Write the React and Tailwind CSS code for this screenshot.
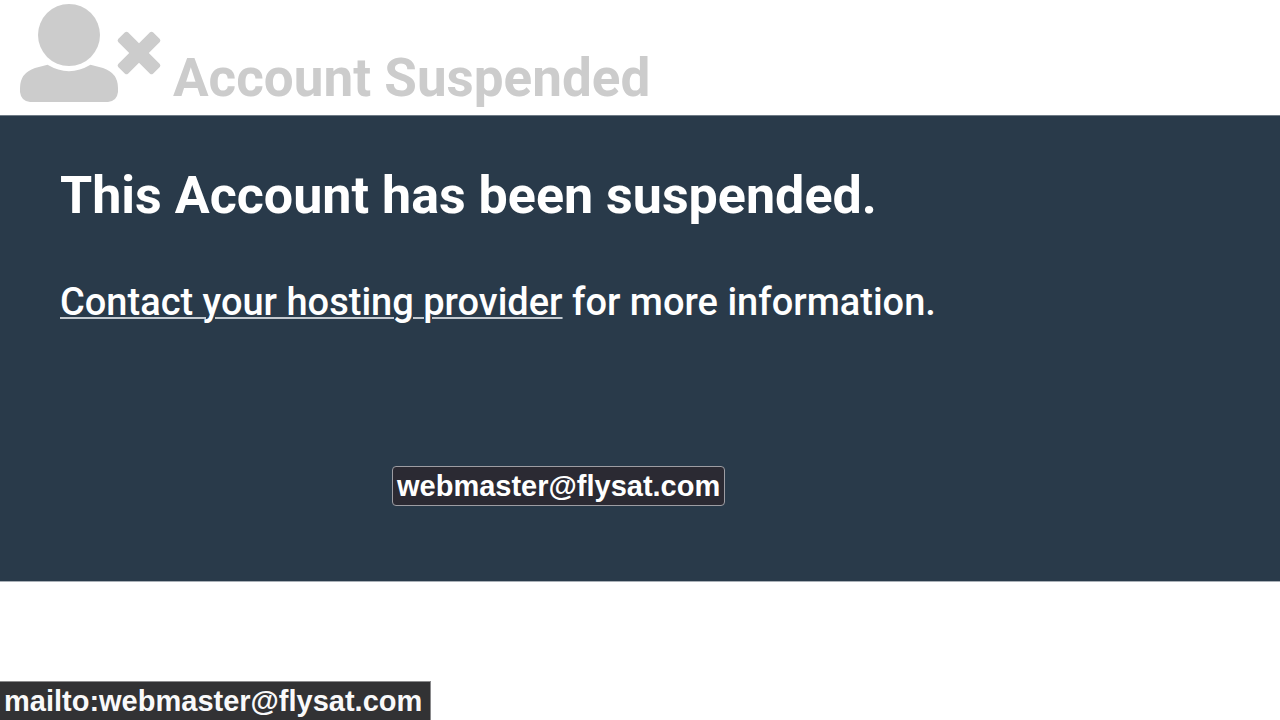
import React from 'react';

const contactEmail = 'webmaster@flysat.com';

const UserTimesIcon = () => (
    <svg viewBox="0 0 141 99" className="w-[141px] h-[99px] shrink-0" fill="currentColor" aria-hidden="true">
        <circle cx="49" cy="31" r="31" />
        <path d="M27.5 60.8 Q49 73.5 70.5 60.8 L83 64 Q98 69 98 84 V88 Q97 97 88 98 H10 Q1 97 0 88 V84 Q0 69 15 64 Z" />
        <path d="M119 39.3 L130 28.3 Q131.500 27 133 28.3 L139.800 35 Q141 36.500 139.800 38 L128.800 49 L139.800 60 Q141 61.500 139.800 63 L133 69.700 Q131.500 71 130 69.700 L119 58.700 L108 69.700 Q106.500 71 105 69.700 L98.200 63 Q97 61.500 98.200 60 L109.200 49 L98.200 38 Q97 36.500 98.200 35 L105 28.3 Q106.500 27 108 28.3 Z" />
    </svg>
);

const App = () => {
    return (
        <div className="relative min-h-screen bg-white font-['Roboto',sans-serif]">
            {/* Page title */}
            <header className="flex items-end px-5 pt-1 pb-3 text-[#cccccc]">
                <UserTimesIcon />
                <h1 className="ml-3 -mb-1 text-[53px] leading-[58px] font-bold">Account Suspended</h1>
            </header>

            {/* Notice */}
            <main className="relative px-[60px] pt-[50px] pb-[249px] border-t border-t-[#6f7b86] border-b border-b-[#a9b0b7] bg-[#293a4a] text-white">
                <h2 className="text-[52px] leading-[60px] font-bold">This Account has been suspended.</h2>
                <p className="mt-[46px] text-[38px] leading-[60px] font-medium">
                    <a href={`mailto:${contactEmail}`} className="underline decoration-2 decoration-[#c3c9cf] underline-offset-2">
                        Contact your hosting provider
                    </a>{' '}
                    for more information.
                </p>

                {/* Link tooltip */}
                <div role="tooltip" className="absolute left-[392px] top-[350px] px-1 border border-[#9d9da3] rounded bg-[#2b2a33] font-['Liberation_Sans',Arial,sans-serif] text-[29px] leading-[38px] font-bold">
                    {contactEmail}
                </div>
            </main>

            {/* Link target status */}
            <div className="absolute left-0 bottom-0 pl-1 pr-2 border-t border-r border-[#8a8a8c] bg-[#323234] font-['Liberation_Sans',Arial,sans-serif] text-[29px] leading-[38px] font-bold text-[#f9f9fa]">
                mailto:{contactEmail}
            </div>
        </div>
    );
};

export default App;
